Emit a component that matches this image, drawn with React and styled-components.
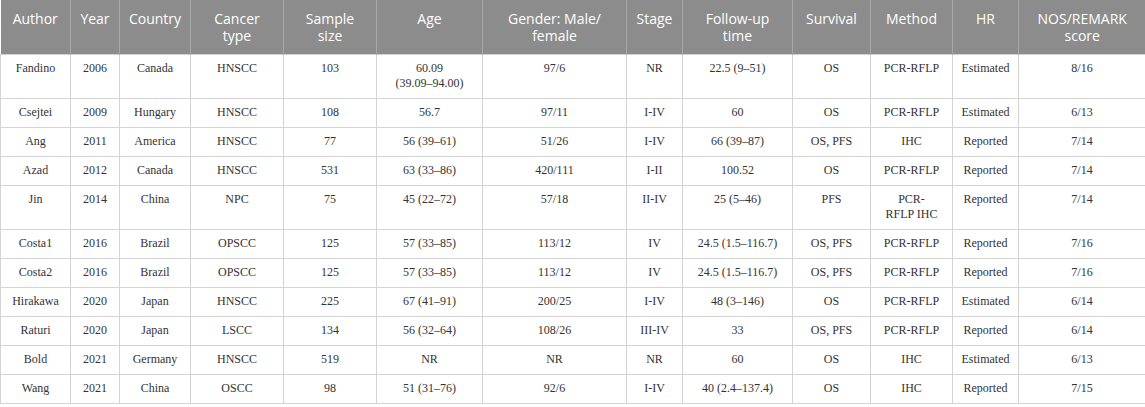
import React from "react";
import styled, { createGlobalStyle } from "styled-components";

const GlobalStyle = createGlobalStyle`
  html, body {
    margin: 0;
    padding: 0;
    background: #ffffff;
  }
`;

const Table = styled.table`
  width: 1145px;
  border-collapse: collapse;
  table-layout: fixed;
  font-family: "Liberation Serif", "Times New Roman", serif;
`;

const HeadCell = styled.th`
  background-color: #8c8c8c;
  color: #ffffff;
  font-family: "Open Sans", "Noto Sans", sans-serif;
  font-weight: 400;
  font-size: 14px;
  line-height: 17px;
  height: 54px;
  box-sizing: border-box;
  padding: 10px 4px;
  text-align: center;
  vertical-align: top;
  white-space: pre-line;
  border-left: 1px solid #a8a8a8;

  &:first-child {
    border-left: none;
  }
`;

const Cell = styled.td`
  color: #333333;
  font-size: 12px;
  line-height: 15px;
  padding: 6px 4px 7px;
  text-align: center;
  vertical-align: top;
  white-space: pre-line;
  border: 1px solid #d3d3d3;
`;

const columns = [
  { title: "Author", width: 70 },
  { title: "Year", width: 49 },
  { title: "Country", width: 71 },
  { title: "Cancer\ntype", width: 93 },
  { title: "Sample\nsize", width: 93 },
  { title: "Age", width: 106 },
  { title: "Gender: Male/\nfemale", width: 144 },
  { title: "Stage", width: 56 },
  { title: "Follow-up\ntime", width: 110 },
  { title: "Survival", width: 78 },
  { title: "Method", width: 82 },
  { title: "HR", width: 66 },
  { title: "NOS/REMARK\nscore", width: 127 },
];

const rows = [
  ["Fandino", "2006", "Canada", "HNSCC", "103", "60.09\n(39.09–94.00)", "97/6", "NR", "22.5 (9–51)", "OS", "PCR-RFLP", "Estimated", "8/16"],
  ["Csejtei", "2009", "Hungary", "HNSCC", "108", "56.7", "97/11", "I-IV", "60", "OS", "PCR-RFLP", "Estimated", "6/13"],
  ["Ang", "2011", "America", "HNSCC", "77", "56 (39–61)", "51/26", "I-IV", "66 (39–87)", "OS, PFS", "IHC", "Reported", "7/14"],
  ["Azad", "2012", "Canada", "HNSCC", "531", "63 (33–86)", "420/111", "I-II", "100.52", "OS", "PCR-RFLP", "Reported", "7/14"],
  ["Jin", "2014", "China", "NPC", "75", "45 (22–72)", "57/18", "II-IV", "25 (5–46)", "PFS", "PCR-\nRFLP IHC", "Reported", "7/14"],
  ["Costa1", "2016", "Brazil", "OPSCC", "125", "57 (33–85)", "113/12", "IV", "24.5 (1.5–116.7)", "OS, PFS", "PCR-RFLP", "Reported", "7/16"],
  ["Costa2", "2016", "Brazil", "OPSCC", "125", "57 (33–85)", "113/12", "IV", "24.5 (1.5–116.7)", "OS, PFS", "PCR-RFLP", "Reported", "7/16"],
  ["Hirakawa", "2020", "Japan", "HNSCC", "225", "67 (41–91)", "200/25", "I-IV", "48 (3–146)", "OS", "PCR-RFLP", "Estimated", "6/14"],
  ["Raturi", "2020", "Japan", "LSCC", "134", "56 (32–64)", "108/26", "III-IV", "33", "OS, PFS", "PCR-RFLP", "Reported", "6/14"],
  ["Bold", "2021", "Germany", "HNSCC", "519", "NR", "NR", "NR", "60", "OS", "IHC", "Estimated", "6/13"],
  ["Wang", "2021", "China", "OSCC", "98", "51 (31–76)", "92/6", "I-IV", "40 (2.4–137.4)", "OS", "IHC", "Reported", "7/15"],
];

export default function App() {
  return (
    <>
      <GlobalStyle />
      <Table>
        <colgroup>
          {columns.map((c) => (
            <col key={c.title} style={{ width: c.width }} />
          ))}
        </colgroup>
        <thead>
          <tr>
            {columns.map((c) => (
              <HeadCell key={c.title}>{c.title}</HeadCell>
            ))}
          </tr>
        </thead>
        <tbody>
          {rows.map((r) => (
            <tr key={r[0]}>
              {r.map((v, i) => (
                <Cell key={i}>{v}</Cell>
              ))}
            </tr>
          ))}
        </tbody>
      </Table>
    </>
  );
}
